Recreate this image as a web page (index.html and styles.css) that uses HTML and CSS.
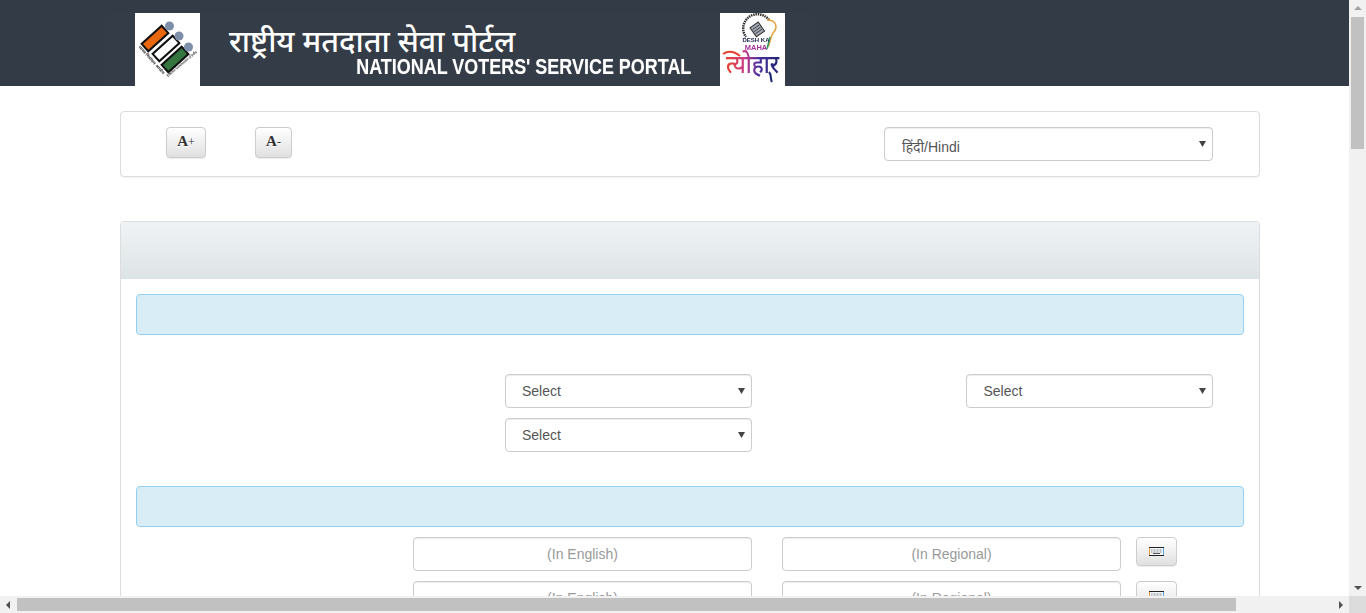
FILE: index.html
```html
<!DOCTYPE html>
<html lang="en">
<head>
<meta charset="utf-8">
<title>National Voters' Service Portal</title>
<link rel="stylesheet" href="styles.css">
</head>
<body>
<header class="site-header">
  <div class="banner">
    <div class="logo-box">
      <svg class="logo" viewBox="0 0 65 73" width="65" height="73">
        <g transform="rotate(-42 20 25.500)"><rect x="6.500" y="20.500" width="27" height="10" fill="#e8660c" stroke="#111" stroke-width="2"/></g>
        <g transform="rotate(-42 31 35.500)"><rect x="17.500" y="30.500" width="27" height="10" fill="#fff" stroke="#111" stroke-width="2"/></g>
        <g transform="rotate(-42 40 46.500)"><rect x="26.500" y="41.500" width="27" height="10" fill="#35753f" stroke="#111" stroke-width="2"/></g>
        <circle cx="34.500" cy="13" r="4.500" fill="#7d8fa9"/>
        <circle cx="44" cy="23" r="4.500" fill="#7d8fa9"/>
        <circle cx="53.500" cy="34" r="4.500" fill="#7d8fa9"/>
        <text class="logo-small" transform="translate(3 34) rotate(48)" textLength="37" lengthAdjust="spacingAndGlyphs">भारत निर्वाचन आयोग</text>
        <text class="logo-small" transform="translate(33 64) rotate(-40)" textLength="38" lengthAdjust="spacingAndGlyphs">Election Commission of India</text>
      </svg>
    </div>
    <div class="titles">
      <div class="title-hi">राष्ट्रीय मतदाता सेवा पोर्टल</div>
      <div class="title-en"><span class="title-en-text">NATIONAL VOTERS' SERVICE PORTAL</span></div>
    </div>
    <div class="logo-box logo-box-2">
      <svg class="logo" viewBox="0 0 65 73" width="65" height="73">
        <defs>
          <linearGradient id="festival" x1="0" y1="0" x2="1" y2="0">
            <stop offset="0" stop-color="#e8442a"/>
            <stop offset=".35" stop-color="#c93a8a"/>
            <stop offset=".6" stop-color="#4a2f9e"/>
            <stop offset="1" stop-color="#1d2570"/>
          </linearGradient>
        </defs>
        <path d="M49 7A12 12 0 1 0 26 24" fill="none" stroke="#333" stroke-width="2.500" stroke-dasharray="1.500 .8"/>
        <path d="M47 7C57 7 58 15 53 20C50 24 51 28 48 34" fill="none" stroke="#e9a03c" stroke-width="1.500"/>
        <path d="M50 24L47 36" stroke="#2f9a66" stroke-width="1.500"/>
        <g transform="rotate(-35 37 16)">
          <rect x="32" y="11" width="10" height="11" fill="#a0a7b2" stroke="#333"/>
          <path d="M33 14H41M33 16.500H41M33 19H41" stroke="#333" stroke-width=".8"/>
        </g>
        <text class="logo-desh" x="36" y="29">DESH KA</text>
        <text class="logo-maha" x="36" y="37">MAHA</text>
        <path d="M3 41C9 37 15 39 20 43" fill="none" stroke="#e2402c" stroke-width="2"/>
        <text class="logo-script" x="6" y="60" textLength="53" lengthAdjust="spacingAndGlyphs" fill="url(#festival)">त्योहार</text>
        <path d="M49 59C52 62 50 66 52 69" fill="none" stroke="#1d2570" stroke-width="2"/>
      </svg>
    </div>
  </div>
</header>

<main class="container">
  <section class="panel tools">
    <button class="btn btn-plus" type="button">A<span class="sign">+</span></button>
    <button class="btn btn-minus" type="button">A<span class="sign">-</span></button>
    <select class="field select-lang"><option>हिंदी/Hindi</option></select>
  </section>

  <section class="panel main-panel">
    <div class="panel-heading"></div>
    <div class="panel-body">
      <div class="notice"></div>
      <div class="select-grid">
        <select class="field cell-a"><option>Select</option></select>
        <select class="field cell-b"><option>Select</option></select>
        <select class="field cell-a"><option>Select</option></select>
      </div>
      <div class="notice"></div>
      <div class="input-rows">
        <div class="input-row">
          <input class="field text-input" type="text" placeholder="(In English)">
          <input class="field text-input" type="text" placeholder="(In Regional)">
          <button class="btn btn-key" type="button">
            <svg class="key-icon" viewBox="0 0 15 9" width="15" height="9"><rect width="15" height="9" fill="#f2f6fa"/><path d="M0 .5H15M0 8.500H15" stroke="#222"/><path d="M.5 1V8" stroke="#e59a3c"/><path d="M14.500 1V8" stroke="#5aa9e6"/><path d="M2 3H13M2 5H13" stroke="#8a8a8a" stroke-dasharray="1 .5"/><path d="M4 6.500H11" stroke="#555"/></svg>
          </button>
        </div>
        <div class="input-row">
          <input class="field text-input" type="text" placeholder="(In English)">
          <input class="field text-input" type="text" placeholder="(In Regional)">
          <button class="btn btn-key" type="button">
            <svg class="key-icon" viewBox="0 0 15 9" width="15" height="9"><rect width="15" height="9" fill="#f2f6fa"/><path d="M0 .5H15M0 8.500H15" stroke="#222"/><path d="M.5 1V8" stroke="#e59a3c"/><path d="M14.500 1V8" stroke="#5aa9e6"/><path d="M2 3H13M2 5H13" stroke="#8a8a8a" stroke-dasharray="1 .5"/><path d="M4 6.500H11" stroke="#555"/></svg>
          </button>
        </div>
      </div>
    </div>
  </section>
</main>

<div class="scroll-v">
  <span class="arrow arrow-up"></span>
  <div class="thumb-v"></div>
  <span class="arrow arrow-down"></span>
</div>
<div class="scroll-h">
  <span class="arrow arrow-left"></span>
  <div class="thumb-h"></div>
  <span class="arrow arrow-right"></span>
</div>
<div class="scroll-corner"></div>
</body>
</html>
```
FILE: styles.css
```css
html, body {
  margin: 0;
  height: 100%;
  overflow: hidden;
  background: #fff;
}
body {
  font-family: "Liberation Sans", Arial, sans-serif;
  font-size: 14px;
  color: #333;
}
* { box-sizing: border-box; }

.site-header {
  width: 1349px;
  height: 86px;
  background: #333b46;
  padding-top: 13px;
  display: flex;
}
.banner {
  margin-left: 105px;
  width: 710px;
  height: 73px;
  background: #343c47;
  padding-left: 30px;
  display: flex;
}
.logo-box {
  width: 65px;
  height: 73px;
  background: #fff;
  flex: none;
}
.logo { display: block; overflow: visible; filter: blur(.35px); }
.logo-small { font-family: "Liberation Sans", "Noto Sans", sans-serif; font-size: 4px; font-weight: bold; fill: #333; }
.logo-desh { font-family: "Liberation Sans", sans-serif; font-size: 6px; font-weight: bold; fill: #1c2350; text-anchor: middle; }
.logo-maha { font-family: "Liberation Sans", sans-serif; font-size: 7.500px; font-weight: bold; fill: #a5339a; text-anchor: middle; }
.logo-script { font-family: "Noto Sans", sans-serif; font-size: 26px; font-weight: 500; }
.logo-box-2 { margin-left: 29px; }
.titles {
  width: 491px;
  padding-left: 29px;
  display: flex;
  flex-direction: column;
}
.title-hi {
  margin-top: 10px;
  height: 34px;
  font-family: "Noto Sans", "Liberation Sans", sans-serif;
  font-size: 30.500px;
  line-height: 35px;
  font-weight: 500;
  color: #fff;
  white-space: nowrap;
}
.title-en {
  display: flex;
  justify-content: flex-end;
  white-space: nowrap;
}
.title-en-text {
  font-family: "Liberation Sans", sans-serif;
  font-weight: 700;
  font-size: 21.500px;
  line-height: 20px;
  color: #fff;
  text-shadow: 0 0 1px rgba(255, 255, 255, .35);
  transform: scaleX(.835);
  transform-origin: right center;
}

.container {
  width: 1140px;
  margin-left: 120px;
}
.panel {
  background: #fff;
  border: 1px solid #ddd;
  border-radius: 4px;
  box-shadow: 0 1px 1px rgba(0, 0, 0, .05);
}
.tools {
  margin-top: 25px;
  height: 66px;
  padding: 15px 0 0 45px;
  display: flex;
  align-items: flex-start;
}
.btn {
  display: block;
  padding: 0;
  border: 1px solid #ccc;
  border-radius: 4px;
  background: linear-gradient(#fff, #e0e0e0);
  text-shadow: 0 1px 0 #fff;
  box-shadow: inset 0 1px 0 rgba(255, 255, 255, .15), 0 1px 1px rgba(0, 0, 0, .075);
  color: #333;
}
.btn-plus, .btn-minus {
  height: 31px;
  padding-bottom: 2px;
  font-family: "Liberation Serif", serif;
  font-weight: bold;
  font-size: 15px;
}
.btn-plus { width: 40px; }
.btn-minus { width: 37px; margin-left: 49px; }
.sign { font-size: 12px; font-weight: normal; }

.field {
  display: block;
  height: 34px;
  padding: 6px 12px;
  font-family: "Liberation Sans", Arial, "Noto Sans", sans-serif;
  font-size: 14px;
  line-height: 20px;
  color: #555;
  background-color: #fff;
  border: 1px solid #ccc;
  border-radius: 4px;
  box-shadow: inset 0 1px 1px rgba(0, 0, 0, .075);
}
select.field {
  appearance: none;
  padding-left: 16px;
  padding-right: 24px;
  background-image: url("data:image/svg+xml,%3Csvg xmlns='http://www.w3.org/2000/svg' width='7' height='6'%3E%3Cpath d='M0 0H7L3.500 6Z' fill='%23444'/%3E%3C/svg%3E");
  background-repeat: no-repeat;
  background-position: right 6px center;
}
select.select-lang {
  width: 329px;
  margin-left: 592px;
  padding-left: 17px;
  padding-top: 9px;
  padding-bottom: 3px;
}

.main-panel {
  margin-top: 44px;
  height: 500px;
}
.panel-heading {
  height: 57px;
  background: linear-gradient(#f0f3f5, #dde4e5);
  border-radius: 3px 3px 0 0;
}
.panel-body { padding: 15px 15px 0; }
.notice {
  height: 41px;
  background: #d9edf7;
  border: 1px solid #93d1ee;
  border-radius: 4px;
}
.select-grid {
  margin-top: 39px;
  margin-bottom: 34px;
  display: grid;
  grid-template-columns: 369px 247px 214px 247px;
  row-gap: 10px;
}
.cell-a { grid-column: 2; width: 247px; }
select.cell-b { grid-column: 4; width: 247px; padding-left: 16.500px; }

.input-rows {
  margin-top: 10px;
  padding-left: 277px;
  display: flex;
  flex-direction: column;
  gap: 10px;
}
.input-row { display: flex; align-items: flex-start; }
.text-input {
  width: 339px;
  margin-right: 30px;
  text-align: center;
}
.text-input + .text-input { margin-right: 15px; }
.text-input::placeholder { color: #999; opacity: 1; }
.btn-key {
  width: 41px;
  height: 29px;
  display: flex;
  align-items: center;
  justify-content: center;
}

.scroll-v {
  position: fixed;
  top: 0;
  right: 0;
  width: 17px;
  height: 596px;
  background: #f1f1f1;
}
.scroll-h {
  position: fixed;
  left: 0;
  bottom: 0;
  width: 1349px;
  height: 17px;
  background: #f1f1f1;
}
.scroll-corner {
  position: fixed;
  right: 0;
  bottom: 0;
  width: 17px;
  height: 17px;
  background: #dcdcdc;
}
.thumb-v {
  position: absolute;
  left: 2px;
  top: 17px;
  width: 13px;
  height: 132px;
  background: #c1c1c1;
}
.thumb-h {
  position: absolute;
  left: 17px;
  top: 2px;
  width: 1219px;
  height: 13px;
  background: #c1c1c1;
}
.arrow {
  position: absolute;
  width: 0;
  height: 0;
  border-style: solid;
  border-color: transparent;
}
.arrow-up { left: 5px; top: 6px; border-width: 0 4px 4px; border-bottom-color: #a3a3a3; }
.arrow-down { left: 5px; bottom: 6px; border-width: 4px 4px 0; border-top-color: #505050; }
.arrow-left { left: 6px; top: 5px; border-width: 4px 4px 4px 0; border-right-color: #505050; }
.arrow-right { right: 6px; top: 5px; border-width: 4px 0 4px 4px; border-left-color: #505050; }
```
